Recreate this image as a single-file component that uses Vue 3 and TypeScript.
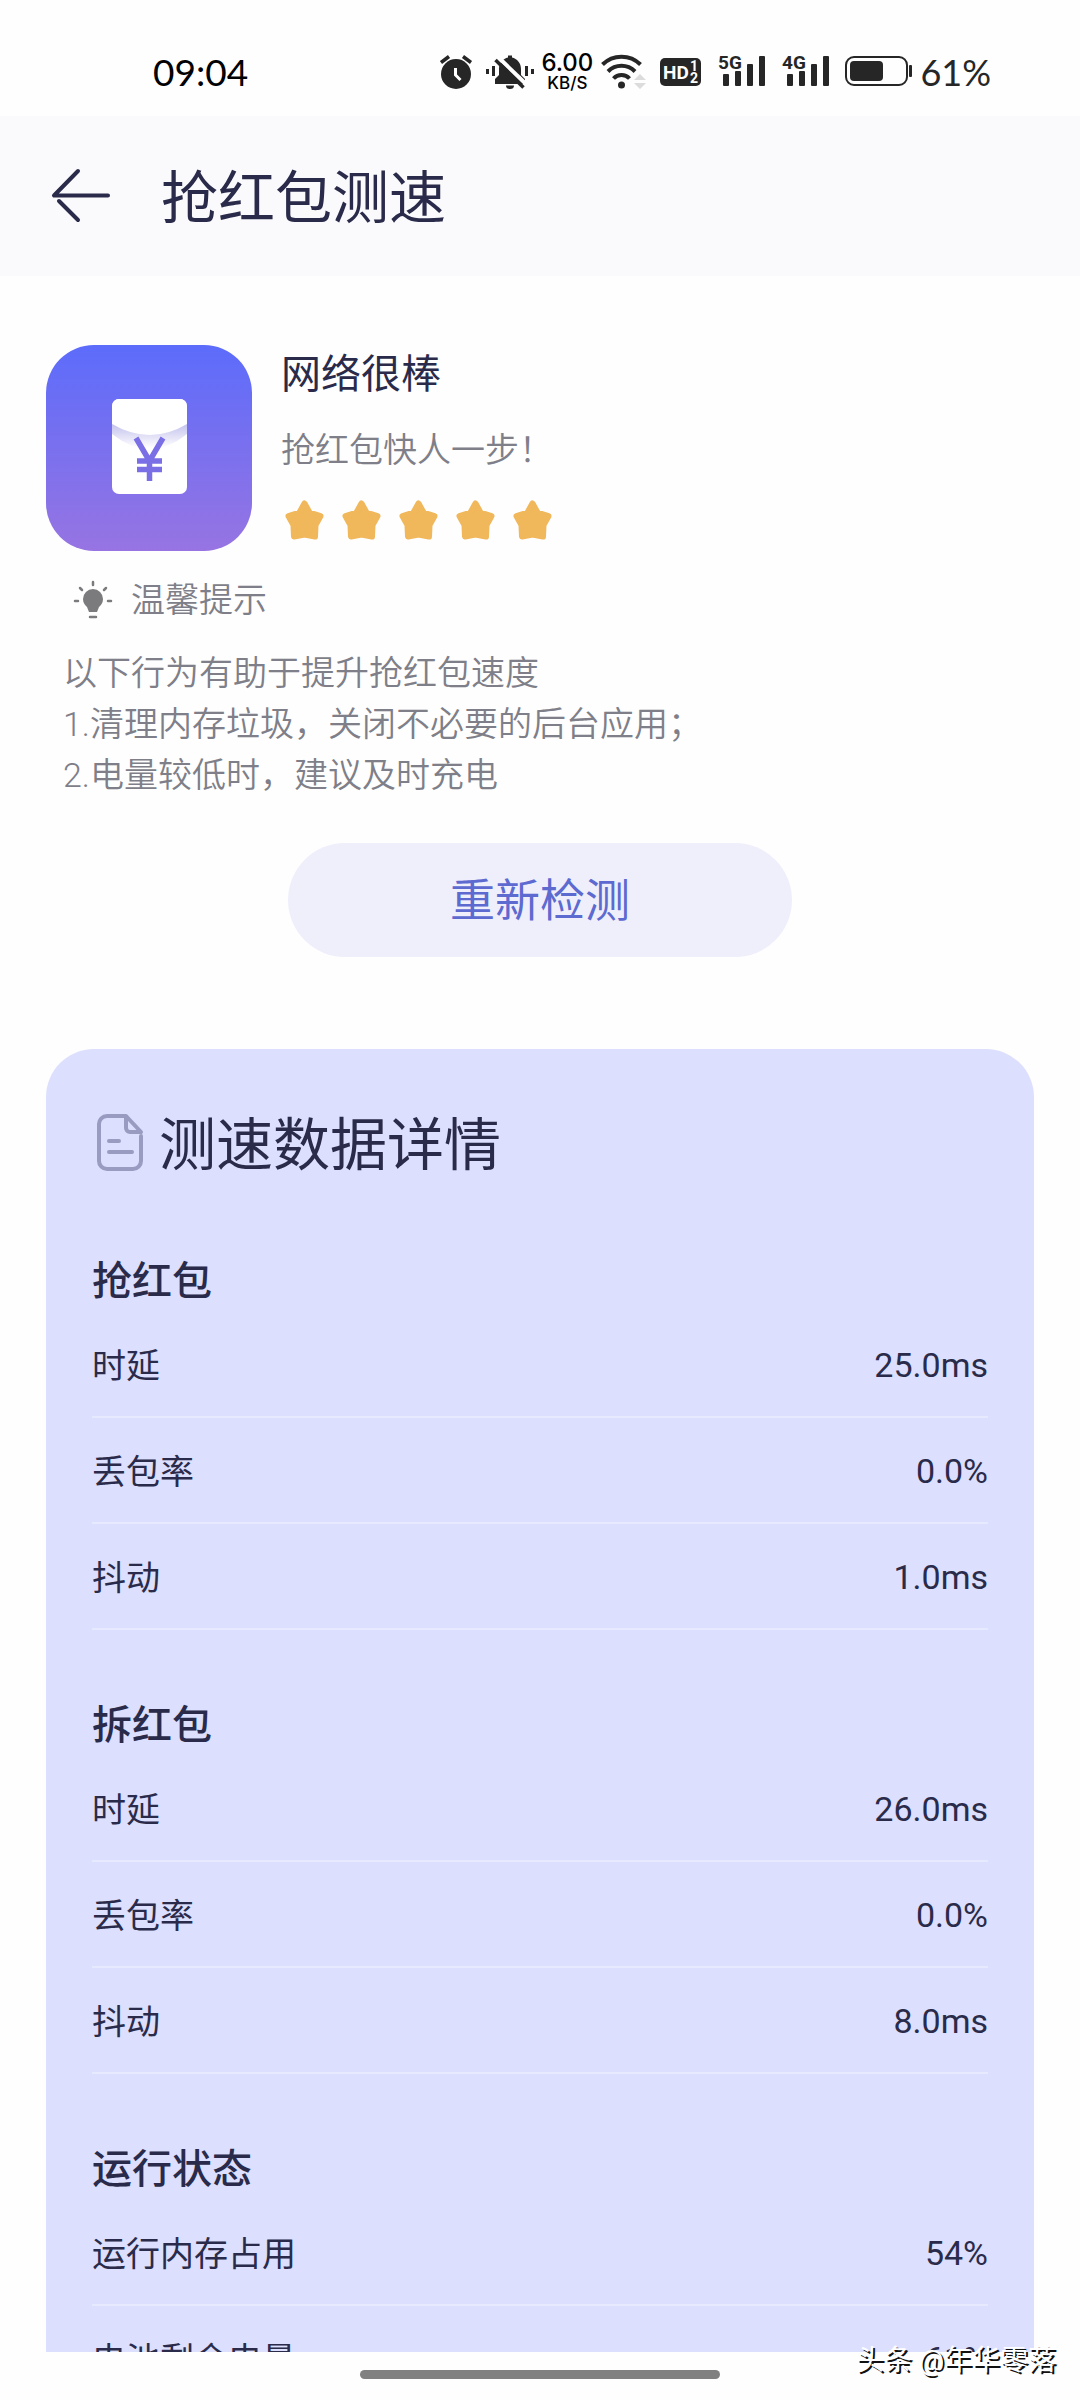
<script setup lang="ts">
interface Metric {
  label: string
  value: string
}

interface MetricGroup {
  title: string
  metrics: Metric[]
}

const stars = 5

const tips: string[] = [
  '以下行为有助于提升抢红包速度',
  '1.清理内存垃圾，关闭不必要的后台应用；',
  '2.电量较低时，建议及时充电',
]

const groups: MetricGroup[] = [
  {
    title: '抢红包',
    metrics: [
      { label: '时延', value: '25.0ms' },
      { label: '丢包率', value: '0.0%' },
      { label: '抖动', value: '1.0ms' },
    ],
  },
  {
    title: '拆红包',
    metrics: [
      { label: '时延', value: '26.0ms' },
      { label: '丢包率', value: '0.0%' },
      { label: '抖动', value: '8.0ms' },
    ],
  },
  {
    title: '运行状态',
    metrics: [
      { label: '运行内存占用', value: '54%' },
      { label: '电池剩余电量', value: '61%' },
    ],
  },
]

const networks: string[] = ['5G', '4G']
</script>

<template>
  <div class="screen">
    <div class="status-bar">
      <span class="clock">09:04</span>
      <div class="indicators">
        <!-- alarm -->
        <svg width="38" height="40" viewBox="0 0 38 40" fill="#262626">
          <circle cx="16" cy="22" r="15" />
          <path d="M1 10.500 9 4.500M31 10.500 23 4.500" stroke="#262626" stroke-width="3.500" fill="none" />
          <path d="M15.500 16v7l5 5" stroke="#fff" stroke-width="3" fill="none" />
        </svg>
        <!-- muted bell with vibration marks -->
        <svg width="48" height="40" viewBox="0 0 48 40" fill="#262626">
          <path d="M9 32v-5l4-4v-6C13 11 17 6.500 22 5.500V3.500h4v2c5 1 9 5.500 9 11.500v6l4 4v5z" />
          <path d="M20 33.500h8a4 3.500 0 0 1-8 0z" />
          <path d="M12 5 41 33" stroke="#fff" stroke-width="4" />
          <path d="M9.500 8 37.500 35.500" stroke="#262626" stroke-width="3.500" />
          <path d="M1.500 17v5M7.500 14v10M40.500 14v10M46.500 17v5" stroke="#262626" stroke-width="3" />
        </svg>
        <div class="speed">
          <span class="speed-value">6.00</span>
          <span class="speed-unit">KB/S</span>
        </div>
        <!-- wifi -->
        <svg width="48" height="40" viewBox="0 0 48 40" fill="none" stroke="#262626" stroke-width="4">
          <path d="M2.500 12.500a27 27 0 0 1 38 0" />
          <path d="M8 19.500a19 19 0 0 1 27 0" />
          <path d="M13.500 26.500a11 11 0 0 1 16 0" />
          <circle cx="21.500" cy="33" r="3.500" fill="#262626" stroke="none" />
          <path d="M40 22 46 28H34zM40 37l6-6H34z" fill="#dcdcdc" stroke="none" />
        </svg>
        <!-- HD voice on both cards -->
        <svg width="48" height="40" viewBox="0 0 48 40">
          <rect x="4" y="6" width="41" height="28" rx="5" fill="#262626" />
          <text x="7" y="27" class="hd">HD</text>
          <text x="34" y="19" class="hd-card">1</text>
          <text x="34" y="31" class="hd-card">2</text>
        </svg>
        <svg v-for="net in networks" :key="net" width="56" height="40" viewBox="0 0 56 40">
          <g fill="#262626">
            <rect x="11" y="22" width="6" height="12" rx="1" />
            <rect x="23" y="19" width="6" height="15" rx="1" />
            <rect x="35" y="12" width="6" height="22" rx="1" />
            <rect x="47" y="4" width="6" height="30" rx="1" />
          </g>
          <text x="6" y="17" class="net">{{ net }}</text>
        </svg>
        <!-- battery -->
        <svg width="72" height="40" viewBox="0 0 72 40" fill="#262626">
          <rect x="6" y="5" width="61" height="28" rx="8" fill="none" stroke="#262626" stroke-width="2" />
          <rect x="10" y="9" width="33" height="20" rx="4" />
          <rect x="69" y="13" width="3" height="12" rx="1" />
        </svg>
        <span class="charge">61%</span>
      </div>
    </div>

    <header class="app-bar">
      <button type="button" class="back" aria-label="返回">
        <svg width="64" height="60" viewBox="0 0 64 60" fill="none" stroke="#2a2b4a" stroke-width="4" stroke-linecap="round" stroke-linejoin="round">
          <path d="M30 5 6 29.500h54M11 35 30 54" />
        </svg>
      </button>
      <h1>抢红包测速</h1>
    </header>

    <main class="content">
      <section class="result">
        <svg class="app-icon" width="206" height="206" viewBox="0 0 206 206">
          <defs>
            <linearGradient id="tile" x1="0" y1="0" x2="0" y2="1">
              <stop offset="0" stop-color="#5c6cfb" />
              <stop offset="1" stop-color="#9774e2" />
            </linearGradient>
            <linearGradient id="fold" gradientUnits="userSpaceOnUse" x1="0" y1="80" x2="0" y2="103">
              <stop offset="0" stop-color="#c6c4ee" />
              <stop offset="1" stop-color="#ffffff" />
            </linearGradient>
          </defs>
          <rect width="206" height="206" rx="48" fill="url(#tile)" />
          <rect x="66" y="54" width="75" height="95" rx="7" fill="#fff" />
          <path d="M66 76h75v13q-37 30-75 0z" fill="url(#fold)" />
          <path d="M73 54h61a7 7 0 0 1 7 7v18q-37 22-75 0V61a7 7 0 0 1 7-7z" fill="#fff" />
          <path d="M90 93 103.500 116 117 93M91 116h25M91 124.500h25M103.500 114v22" fill="none" stroke="#7b6fe6" stroke-width="5.500" />
        </svg>
        <div class="verdict">
          <h2>网络很棒</h2>
          <p>抢红包快人一步！</p>
          <div class="stars" role="img" aria-label="5星">
            <svg v-for="n in stars" :key="n" width="41" height="42" viewBox="0 0 41 42">
              <path
                d="M20.500 4.500 25.500 13.500 36.500 17 31.500 26 31 37.500 20.500 35.500 10 37.500 9.500 26 4.500 17 15.500 13.500z"
                fill="#f0b75b"
                stroke="#f0b75b"
                stroke-width="6"
                stroke-linejoin="round"
              />
            </svg>
          </div>
        </div>
      </section>

      <section class="tips">
        <h3>
          <svg width="40" height="42" viewBox="0 0 40 42" fill="#7b7b7d">
            <path d="M20 9a10 10 0 0 1 10 10c0 4-2 6-4 8l-2 5h-8l-2-5c-2-2-4-4-4-8A10 10 0 0 1 20 9z" />
            <path d="M17 37h6M20 2v3M7 8l2 2M33 8l-2 2M2 21h3M35 21h3" stroke="#7b7b7d" stroke-width="2.500" stroke-linecap="round" />
          </svg>
          温馨提示
        </h3>
        <p v-for="tip in tips" :key="tip">{{ tip }}</p>
      </section>

      <button type="button" class="retest">重新检测</button>

      <section class="details">
        <h2>
          <svg width="50" height="68" viewBox="0 0 50 68" fill="none" stroke="#9a9bc0" stroke-width="4" stroke-linecap="round" stroke-linejoin="round">
            <path d="M46 24v25a8 8 0 0 1-8 8H12a8 8 0 0 1-8-8V12a8 8 0 0 1 8-8h19l15 16H35a4 4 0 0 1-4-4V4M14 29h10M14 40h23" />
          </svg>
          测速数据详情
        </h2>
        <section v-for="group in groups" :key="group.title" class="group">
          <h3>{{ group.title }}</h3>
          <table>
            <tbody>
              <tr v-for="metric in group.metrics" :key="metric.label">
                <th scope="row">{{ metric.label }}</th>
                <td>{{ metric.value }}</td>
              </tr>
            </tbody>
          </table>
        </section>
      </section>
    </main>

    <div class="gesture-bar"><span class="handle"></span></div>
    <span class="watermark">头条 @年华零落</span>
  </div>
</template>

<style>
body {
  margin: 0;
  background: #fefefe;
}
</style>

<style scoped>
.screen {
  position: relative;
  display: flex;
  flex-direction: column;
  height: 100vh;
  overflow: hidden;
  color: #2a2b4a;
  font-family: Roboto, "Noto Sans CJK SC", sans-serif;
}

h1,
h2,
h3,
p {
  margin: 0;
  font-weight: 400;
}

svg {
  display: block;
  flex: none;
}

button {
  padding: 0;
  border: 0;
  font-family: inherit;
}

.status-bar {
  flex: none;
  display: flex;
  align-items: center;
  justify-content: space-between;
  height: 116px;
  padding: 28px 89px 0 153px;
  box-sizing: border-box;
  font-family: Lato, sans-serif;
  font-size: 36px;
  line-height: 40px;
  color: #262626;
}

.clock {
  color: #000;
  font-size: 37px;
}

.indicators {
  display: flex;
  align-items: center;
  gap: 8px;
}

.speed {
  display: flex;
  flex-direction: column;
  align-items: center;
  width: 50px;
  font-family: Inter, sans-serif;
  font-weight: 500;
  color: #000;
}

.speed-value {
  font-size: 24px;
  line-height: 22px;
}

.speed-unit {
  font-size: 17px;
  line-height: 18px;
}

.hd,
.hd-card,
.net {
  font-family: Roboto, sans-serif;
  font-weight: 700;
}

.hd {
  font-size: 19px;
  fill: #fff;
}

.hd-card {
  font-size: 14px;
  fill: #fff;
}

.net {
  font-size: 19px;
  fill: #262626;
  stroke: #fefefe;
  stroke-width: 2px;
  paint-order: stroke;
}

.app-bar {
  flex: none;
  display: flex;
  align-items: center;
  gap: 49px;
  height: 160px;
  padding: 0 48px;
  background: #fafafc;
}

.back {
  background: none;
}

.app-bar h1 {
  padding-top: 6px;
  font-size: 57px;
  line-height: 80px;
}

.content {
  flex: 1;
  min-height: 0;
  overflow: hidden;
  padding: 69px 46px 0;
}

.result {
  display: flex;
  gap: 29px;
}

.verdict h2 {
  font-size: 40px;
  line-height: 60px;
}

.verdict p {
  margin-top: 20px;
  font-size: 34px;
  line-height: 50px;
}

.verdict p,
.tips {
  color: #7e7f88;
}

.verdict p,
.tips h3,
.tips p {
  font-weight: 350;
}

.stars {
  display: flex;
  gap: 16px;
  margin-top: 24px;
  padding-left: 3px;
}

.tips {
  padding: 24px 17px 0;
  font-size: 34px;
  line-height: 51px;
}

.tips h3 {
  display: flex;
  align-items: center;
  gap: 18px;
  padding-left: 10px;
  margin-bottom: 22px;
  font-size: 34px;
}

.retest {
  display: block;
  width: 504px;
  height: 114px;
  margin: 42px auto 92px;
  padding-top: 4px;
  border-radius: 57px;
  background: #efeffc;
  color: #5d6ad0;
  font-size: 45px;
  line-height: 60px;
}

.details {
  padding: 57px 46px;
  border-radius: 48px 48px 0 0;
  background: #dcdffd;
}

.details h2 {
  display: flex;
  align-items: center;
  gap: 14px;
  margin-bottom: 62px;
  padding-left: 3px;
  font-size: 57px;
  line-height: 80px;
}

.group {
  margin-bottom: 62px;
}

.group h3 {
  padding-top: 4px;
  font-size: 40px;
  font-weight: 500;
  line-height: 60px;
}

table {
  width: 100%;
  border-collapse: separate;
  border-spacing: 0;
  font-size: 34px;
  line-height: 50px;
}

th,
td {
  box-sizing: border-box;
  height: 106px;
  padding: 0;
  border-bottom: 2px solid #e7e9ff;
  font-weight: 400;
  text-align: left;
}

th {
  padding-top: 4px;
}

td {
  padding-top: 2px;
  text-align: right;
}

.gesture-bar {
  flex: none;
  display: flex;
  justify-content: center;
  height: 30px;
  padding-top: 18px;
}

.handle {
  width: 360px;
  height: 9px;
  border-radius: 5px;
  background: #808080;
}

.watermark {
  position: absolute;
  right: 24px;
  bottom: 19px;
  color: #fff;
  font-size: 28px;
  line-height: 40px;
  text-shadow: 2px 2px 0 #111;
}
</style>
